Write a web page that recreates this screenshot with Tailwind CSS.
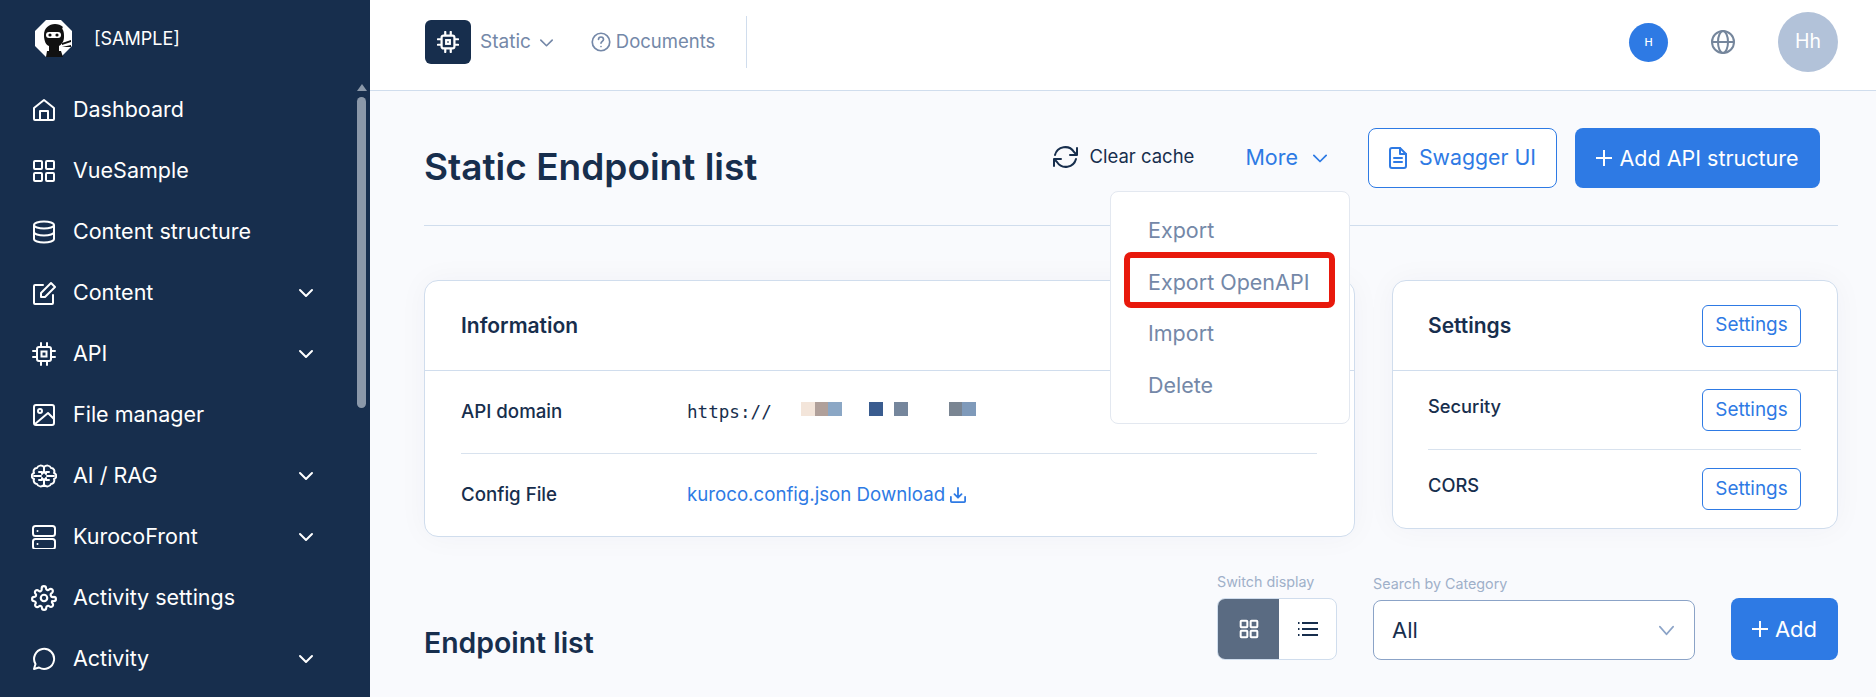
<!DOCTYPE html>
<html lang="en">
<head>
  <meta charset="UTF-8" />
  <title>Static Endpoint list</title>
  <script src="https://cdn.jsdelivr.net/npm/@tailwindcss/browser@4"></script>
</head>
<body class="font-['Inter',sans-serif] text-[#172e4d] bg-[#f9fafd]">
<div class="flex h-[697px] w-[1876px] overflow-hidden">

  <!-- sidebar -->
  <aside class="relative w-[370px] shrink-0 bg-[#172e4d] text-white">
    <div class="flex h-[79px] items-center pl-[35px] pb-[2px]">
      <svg class="w-[37px] h-[37px]" viewBox="0 0 37 37">
        <polygon points="11,0 26,0 37,11 37,26 26,37 11,37 0,26 0,11" fill="#fff"/>
        <path d="M9 15c0-7 5-11 11-11 3 0 6 1 8 3-1 1-1 2 0 3 1 2 1 5 1 7 0 5-3 8-5 9v5h2l2 6H11l1-6h2v-5c-3-1-5-5-5-11z" fill="#111"/>
        <rect x="11" y="12" width="15" height="6" rx="3" fill="#fff"/>
        <circle cx="15" cy="15" r="1.6" fill="#111"/><circle cx="22" cy="15" r="1.6" fill="#111"/>
        <path d="M27 23l9-3v2l-9 3zM27 27l9-2v2z" fill="#111"/>
      </svg>
      <span class="ml-[22px] text-[18px]">[SAMPLE]</span>
    </div>
    <nav class="text-[21.5px] leading-none">
      <a class="flex h-[61px] items-center pl-[32px] pr-[95px]">
        <svg class="w-[24px] h-[24px] mr-[17px]" viewBox="0 0 24 24" fill="none" stroke="currentColor" stroke-width="2" stroke-linejoin="round"><path d="M2 21V10l10-8 10 8v11a1 1 0 0 1-1 1H3a1 1 0 0 1-1-1z"/><path d="M8 22v-9h8v9"/></svg>
        <span>Dashboard</span>
      </a>
      <a class="flex h-[61px] items-center pl-[32px] pr-[95px]">
        <svg class="w-[24px] h-[24px] mr-[17px]" viewBox="0 0 24 24" fill="none" stroke="currentColor" stroke-width="2"><rect x="2" y="2" width="8" height="8" rx="1"/><rect x="14" y="2" width="8" height="8" rx="1"/><rect x="2" y="14" width="8" height="8" rx="1"/><rect x="14" y="14" width="8" height="8" rx="1"/></svg>
        <span>VueSample</span>
      </a>
      <a class="flex h-[61px] items-center pl-[32px] pr-[95px]">
        <svg class="w-[24px] h-[24px] mr-[17px]" viewBox="0 0 24 24" fill="none" stroke="currentColor" stroke-width="2"><ellipse cx="12" cy="5" rx="10" ry="3.5"/><path d="M2 5v14c0 2 4.500 3.500 10 3.500s10-1.500 10-3.500V5"/><path d="M2 12c0 2 4.500 3.500 10 3.500s10-1.500 10-3.500"/></svg>
        <span>Content structure</span>
      </a>
      <a class="flex h-[61px] items-center justify-between pl-[32px] pr-[56px]">
        <span class="flex items-center">
          <svg class="w-[24px] h-[24px] mr-[17px]" viewBox="0 0 24 24" fill="none" stroke="currentColor" stroke-width="2" stroke-linejoin="round" stroke-linecap="round"><path d="M11 4H3a1 1 0 0 0-1 1v17a1 1 0 0 0 1 1h17a1 1 0 0 0 1-1v-8"/><path d="M9 16v-4L19 2l4 4-10 10z"/></svg>
          <span>Content</span>
        </span>
        <svg class="w-[16px] h-[16px]" viewBox="0 0 16 16" fill="none" stroke="currentColor" stroke-width="2" stroke-linecap="round" stroke-linejoin="round"><path d="M2 5l6 6 6-6"/></svg>
      </a>
      <a class="flex h-[61px] items-center justify-between pl-[32px] pr-[56px]">
        <span class="flex items-center">
          <svg class="w-[24px] h-[24px] mr-[17px]" viewBox="0 0 24 24" fill="none" stroke="currentColor" stroke-width="2" stroke-linecap="round"><rect x="5" y="5" width="14" height="14" rx="2"/><rect x="9.500" y="9.500" width="5" height="5"/><path d="M9 1v4M15 1v4M9 19v4M15 19v4M1 9h4M1 15h4M19 9h4M19 15h4"/></svg>
          <span>API</span>
        </span>
        <svg class="w-[16px] h-[16px]" viewBox="0 0 16 16" fill="none" stroke="currentColor" stroke-width="2" stroke-linecap="round" stroke-linejoin="round"><path d="M2 5l6 6 6-6"/></svg>
      </a>
      <a class="flex h-[61px] items-center pl-[32px] pr-[95px]">
        <svg class="w-[24px] h-[24px] mr-[17px]" viewBox="0 0 24 24" fill="none" stroke="currentColor" stroke-width="2" stroke-linejoin="round"><rect x="2" y="2" width="20" height="20" rx="2"/><circle cx="8" cy="8" r="2"/><path d="M3 21L16 10l6 6"/></svg>
        <span>File manager</span>
      </a>
      <a class="flex h-[61px] items-center justify-between pl-[32px] pr-[56px]">
        <span class="flex items-center">
          <svg class="w-[26px] h-[24px] mr-[16px] -ml-[1px]" viewBox="0 0 26 24" fill="none" stroke="currentColor" stroke-width="2" stroke-linecap="round" stroke-linejoin="round"><path d="M13 3C11 1 7 1 6 4 3 4 2 7 3 9 0 10 0 14 3 15 2 18 4 20 6 20 7 23 11 23 13 21 15 23 19 23 20 20 22 20 24 18 23 15 26 14 26 10 23 9 24 7 23 4 20 4 19 1 15 1 13 3z"/><path d="M13 3v6M13 15v6M3 12h7M16 12h7M8 8h3v2M18 8h-3v2M8 16h3v-2M18 16h-3v-2"/></svg>
          <span>AI / RAG</span>
        </span>
        <svg class="w-[16px] h-[16px]" viewBox="0 0 16 16" fill="none" stroke="currentColor" stroke-width="2" stroke-linecap="round" stroke-linejoin="round"><path d="M2 5l6 6 6-6"/></svg>
      </a>
      <a class="flex h-[61px] items-center justify-between pl-[32px] pr-[56px]">
        <span class="flex items-center">
          <svg class="w-[24px] h-[24px] mr-[17px]" viewBox="0 0 24 24" fill="none" stroke="currentColor" stroke-width="2" stroke-linecap="round"><rect x="1" y="1" width="22" height="10" rx="2.500"/><rect x="1" y="14" width="22" height="10" rx="2.500"/><path d="M5.500 6h.01M5.500 19h.01"/></svg>
          <span>KurocoFront</span>
        </span>
        <svg class="w-[16px] h-[16px]" viewBox="0 0 16 16" fill="none" stroke="currentColor" stroke-width="2" stroke-linecap="round" stroke-linejoin="round"><path d="M2 5l6 6 6-6"/></svg>
      </a>
      <a class="flex h-[61px] items-center pl-[32px] pr-[95px]">
        <svg class="w-[26px] h-[26px] mr-[16px] -ml-[1px]" viewBox="0 0 24 24" fill="none" stroke="currentColor" stroke-width="2" stroke-linecap="round" stroke-linejoin="round"><circle cx="12" cy="12" r="3"/><path d="M19.400 15a1.650 1.650 0 0 0 .33 1.820l.06.06a2 2 0 1 1-2.830 2.830l-.06-.06a1.650 1.650 0 0 0-2.820 1.170V21a2 2 0 1 1-4 0v-.09a1.650 1.650 0 0 0-2.830-1.140l-.06.06a2 2 0 1 1-2.830-2.830l.06-.06A1.650 1.650 0 0 0 3.090 15H3a2 2 0 1 1 0-4h.09a1.650 1.650 0 0 0 1.140-2.830l-.06-.06a2 2 0 1 1 2.830-2.830l.06.06A1.650 1.650 0 0 0 9.880 4.090V3a2 2 0 1 1 4 0v.09a1.650 1.650 0 0 0 2.830 1.140l.06-.06a2 2 0 1 1 2.830 2.830l-.06.06A1.650 1.650 0 0 0 20.910 11H21a2 2 0 1 1 0 4h-.09a1.650 1.650 0 0 0-1.510 0z"/></svg>
        <span>Activity settings</span>
      </a>
      <a class="flex h-[61px] items-center justify-between pl-[32px] pr-[56px]">
        <span class="flex items-center">
          <svg class="w-[24px] h-[24px] mr-[17px]" viewBox="0 0 24 24" fill="none" stroke="currentColor" stroke-width="2" stroke-linejoin="round"><path d="M2 22l1.500-5A10 10 0 1 1 7 20.500z"/></svg>
          <span>Activity</span>
        </span>
        <svg class="w-[16px] h-[16px]" viewBox="0 0 16 16" fill="none" stroke="currentColor" stroke-width="2" stroke-linecap="round" stroke-linejoin="round"><path d="M2 5l6 6 6-6"/></svg>
      </a>
    </nav>
    <!-- scrollbar -->
    <div class="absolute left-[357px] top-[84px] h-0 w-0 border-x-[5px] border-b-[7px] border-x-transparent border-b-[#8b98a9]"></div>
    <div class="absolute left-[357px] top-[97px] h-[311px] w-[9px] rounded-full bg-[#8b98a9]"></div>
  </aside>

  <div class="flex-1 min-w-0">
    <!-- top bar -->
    <header class="flex h-[91px] items-center justify-between border-b border-[#d0dded] bg-white pb-[6px] pl-[55px] pr-[38px]">
      <div class="flex items-center text-[#7488a8]">
        <span class="flex h-[44px] w-[46px] items-center justify-center rounded-[6px] bg-[#172e4d] text-white">
          <svg class="w-[22px] h-[22px]" viewBox="0 0 24 24" fill="none" stroke="currentColor" stroke-width="2.400" stroke-linecap="round"><rect x="5" y="5" width="14" height="14" rx="2"/><rect x="10" y="10" width="4" height="4"/><path d="M9 1v3M15 1v3M9 20v3M15 20v3M1 9h3M1 15h3M20 9h3M20 15h3"/></svg>
        </span>
        <span class="ml-[9px] text-[19px]">Static</span>
        <svg class="ml-[9px] w-[13px] h-[13px]" viewBox="0 0 16 16" fill="none" stroke="currentColor" stroke-width="2" stroke-linecap="round" stroke-linejoin="round"><path d="M1 5l7 7 7-7"/></svg>
        <svg class="ml-[38px] w-[20px] h-[20px]" viewBox="0 0 24 24" fill="none" stroke="currentColor" stroke-width="2" stroke-linecap="round"><circle cx="12" cy="12" r="10.500"/><path d="M9 9a3 3 0 0 1 6 0c0 2-3 2.500-3 4.500M12 17.500h.01"/></svg>
        <span class="ml-[5px] text-[18.500px]">Documents</span>
        <span class="ml-[31px] h-[52px] w-px bg-[#d0dded]"></span>
      </div>
      <div class="flex items-center">
        <span class="flex h-[39px] w-[39px] items-center justify-center rounded-full bg-[#2e7ae4] text-[11px] font-medium text-white">H</span>
        <svg class="ml-[43px] w-[24px] h-[24px] text-[#75869c]" viewBox="0 0 24 24" fill="none" stroke="currentColor" stroke-width="2"><circle cx="12" cy="12" r="11"/><ellipse cx="12" cy="12" rx="5" ry="11"/><path d="M1 12h22"/></svg>
        <span class="ml-[43px] flex h-[60px] w-[60px] items-center justify-center rounded-full bg-[#b2c2d9] text-[19.500px] text-white">Hh</span>
      </div>
    </header>

    <main class="pl-[54px] pr-[38px]">
      <!-- page title -->
      <div class="flex h-[135px] items-start justify-between border-b border-[#d0dded] pr-[18px] pt-[37px]">
        <h1 class="pt-[20px] text-[37px] font-semibold leading-[37px]">Static Endpoint list</h1>
        <div class="relative flex items-center">
          <svg class="mb-[3px] w-[27px] h-[24px]" viewBox="0 0 27 24" fill="none" stroke="currentColor" stroke-width="2" stroke-linecap="round" stroke-linejoin="round"><path d="M3 10a10.500 10.500 0 0 1 19-3l3 3M25 3v7h-7"/><path d="M24 14a10.500 10.500 0 0 1-19 3l-3-3M2 21v-7h7"/></svg>
          <span class="mb-[2px] ml-[10px] text-[18.500px]">Clear cache</span>
          <span class="mb-[2px] ml-[51px] text-[21.500px] text-[#2e7ae4]">More</span>
          <svg class="ml-[15px] w-[14px] h-[14px] text-[#2e7ae4]" viewBox="0 0 16 16" fill="none" stroke="currentColor" stroke-width="2" stroke-linecap="round" stroke-linejoin="round"><path d="M1 5l7 7 7-7"/></svg>
          <button class="ml-[41px] flex h-[60px] w-[189px] items-center justify-center rounded-[8px] border border-[#2e7ae4] bg-white text-[21.300px] text-[#2e7ae4]">
            <svg class="mr-[12px] w-[18px] h-[22px]" viewBox="0 0 18 22" fill="none" stroke="currentColor" stroke-width="2" stroke-linejoin="round" stroke-linecap="round"><path d="M1 3a2 2 0 0 1 2-2h8l6 6v12a2 2 0 0 1-2 2H3a2 2 0 0 1-2-2z"/><path d="M11 1v6h6M5 11h8M5 15h8"/></svg>
            Swagger UI
          </button>
          <button class="ml-[18px] flex h-[60px] w-[245px] items-center justify-center rounded-[8px] bg-[#2e7ae4] text-[21.500px] text-white">
            <svg class="mr-[7px] w-[16px] h-[16px]" viewBox="0 0 16 16" fill="none" stroke="currentColor" stroke-width="2"><path d="M8 0v16M0 8h16"/></svg>
            Add API structure
          </button>
        </div>
      </div>

      <!-- cards -->
      <div class="mt-[54px] flex items-start justify-between">
        <section class="h-[257px] w-[931px] rounded-[14px] border border-[#d0dded] bg-white shadow-[0_0_30px_rgba(23,46,77,0.04)]">
          <h2 class="flex h-[90px] items-center border-b border-[#d0dded] pl-[36px] text-[21px] font-semibold">Information</h2>
          <div class="pl-[36px] pr-[37px]">
            <div class="flex h-[83px] items-center border-b border-[#d8e2ee]">
              <span class="w-[226px] text-[18.700px] font-medium">API domain</span>
              <span class="font-['DejaVu_Sans_Mono',monospace] text-[17.600px]">https://</span>
              <span class="mb-[6px] ml-[29px] flex">
                <i class="h-[14px] w-[14px] bg-[#f3e5da]"></i><i class="h-[14px] w-[13px] bg-[#b0a09a]"></i><i class="h-[14px] w-[14px] bg-[#8ba7c5]"></i>
                <i class="ml-[27px] h-[14px] w-[14px] bg-[#3a5c8f]"></i><i class="ml-[11px] h-[14px] w-[14px] bg-[#75869c]"></i>
                <i class="ml-[41px] h-[14px] w-[13px] bg-[#7a8592]"></i><i class="h-[14px] w-[14px] bg-[#7f9aba]"></i>
              </span>
            </div>
            <div class="flex h-[82px] items-center">
              <span class="w-[226px] text-[18.700px] font-medium">Config File</span>
              <a class="flex items-center text-[18.700px] text-[#2e7ae4]">kuroco.config.json Download
                <svg class="ml-[5px] w-[16px] h-[16px]" viewBox="0 0 18 18" fill="none" stroke="currentColor" stroke-width="2" stroke-linecap="round" stroke-linejoin="round"><path d="M1 11v5a1 1 0 0 0 1 1h14a1 1 0 0 0 1-1v-5M9 1v11M5 8l4 4 4-4"/></svg>
              </a>
            </div>
          </div>
        </section>

        <section class="h-[249px] w-[446px] rounded-[14px] border border-[#d0dded] bg-white pl-[35px] pr-[36px] shadow-[0_0_30px_rgba(23,46,77,0.04)]">
          <div class="-ml-[35px] -mr-[36px] flex h-[90px] items-center justify-between border-b border-[#d0dded] pl-[35px] pr-[36px]">
            <h2 class="text-[21px] font-semibold">Settings</h2>
            <button class="h-[42px] w-[99px] rounded-[6px] border border-[#2e7ae4] text-[18.900px] text-[#2e7ae4]">Settings</button>
          </div>
          <div class="flex h-[79px] items-start justify-between border-b border-[#d8e2ee] pt-[18px]">
            <span class="mt-[4px] text-[18.300px] font-medium">Security</span>
            <button class="h-[42px] w-[99px] rounded-[6px] border border-[#2e7ae4] text-[18.900px] text-[#2e7ae4]">Settings</button>
          </div>
          <div class="flex items-start justify-between pt-[18px]">
            <span class="mt-[4px] text-[18.300px] font-medium">CORS</span>
            <button class="h-[42px] w-[99px] rounded-[6px] border border-[#2e7ae4] text-[18.900px] text-[#2e7ae4]">Settings</button>
          </div>
        </section>
      </div>

      <!-- endpoint list header -->
      <div class="mt-[36px] flex items-end justify-between">
        <h2 class="text-[28.400px] font-semibold leading-[34px]">Endpoint list</h2>
        <div class="flex items-end">
          <div>
            <div class="mb-[8px] text-[14.300px] leading-[17px] text-[#9fb0c9]">Switch display</div>
            <div class="flex h-[62px] w-[120px] overflow-hidden rounded-[8px] border border-[#d0dded] bg-white">
              <span class="flex w-[61px] items-center justify-center bg-[#5a6b82] text-white">
                <svg class="w-[20px] h-[20px]" viewBox="0 0 24 24" fill="none" stroke="currentColor" stroke-width="2.400"><rect x="2" y="2" width="8" height="8" rx="1"/><rect x="14" y="2" width="8" height="8" rx="1"/><rect x="2" y="14" width="8" height="8" rx="1"/><rect x="14" y="14" width="8" height="8" rx="1"/></svg>
              </span>
              <span class="flex flex-1 items-center justify-center">
                <svg class="w-[20px] h-[20px]" viewBox="0 0 20 20" fill="none" stroke="currentColor" stroke-width="2"><path d="M4 4h16M4 10h16M4 16h16"/><path d="M0 4h1.500M0 10h1.500M0 16h1.500"/></svg>
              </span>
            </div>
          </div>
          <div class="ml-[36px]">
            <div class="mb-[8px] text-[14.300px] leading-[17px] text-[#9fb0c9]">Search by Category</div>
            <div class="flex h-[60px] w-[322px] items-center justify-between rounded-[8px] border border-[#8ba3c7] bg-white pl-[18px] pr-[20px] text-[22px]">
              All
              <svg class="w-[15px] h-[15px] text-[#8ba3c7]" viewBox="0 0 16 16" fill="none" stroke="currentColor" stroke-width="2" stroke-linecap="round" stroke-linejoin="round"><path d="M1 4l7 8 7-8"/></svg>
            </div>
          </div>
          <button class="ml-[36px] flex h-[62px] w-[107px] items-center justify-center rounded-[8px] bg-[#2e7ae4] text-[22px] text-white">
            <svg class="mr-[7px] w-[16px] h-[16px]" viewBox="0 0 16 16" fill="none" stroke="currentColor" stroke-width="2"><path d="M8 0v16M0 8h16"/></svg>
            Add
          </button>
        </div>
      </div>
    </main>
  </div>

  <!-- dropdown menu opened from "More" -->
  <div class="absolute left-[1110px] top-[191px] flex h-[233px] w-[240px] flex-col rounded-[8px] border border-[#e3e8f0] bg-white pl-[37px] pt-[12px] text-[21.500px] text-[#7488a8]">
    <a class="flex h-[52px] items-center">Export</a>
    <a class="flex h-[52px] items-center">Export OpenAPI</a>
    <a class="flex h-[51px] items-center">Import</a>
    <a class="flex h-[52px] items-center">Delete</a>
  </div>
  <!-- red annotation box -->
  <div class="absolute left-[1124px] top-[252px] h-[56px] w-[211px] rounded-[7px] border-[6px] border-[#e8190c]"></div>
</div>
</body>
</html>
